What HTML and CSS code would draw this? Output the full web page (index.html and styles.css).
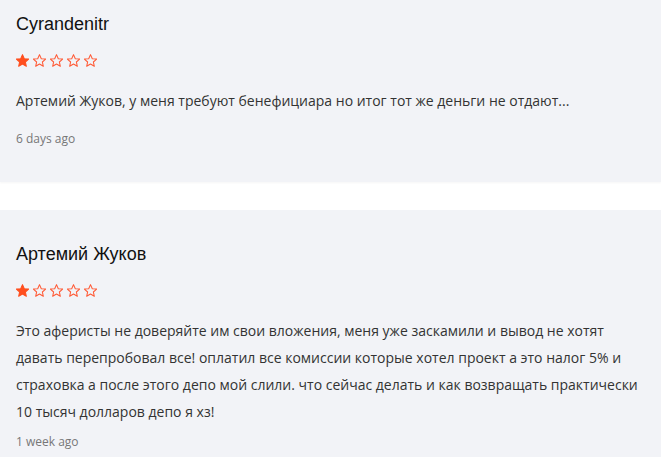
FILE: index.html
```html
<!DOCTYPE html>
<html lang="ru">
<head>
    <meta charset="UTF-8">
    <meta name="viewport" content="width=device-width, initial-scale=1.0">
    <title>Отзывы</title>
    <link rel="stylesheet" href="styles.css">
</head>
<body>
    <div class="reviews">
        <div class="review">
            <div class="review-name">Cyrandenitr</div>
            <div class="stars">
                <svg class="star on" viewBox="1.5 2 21 20"><path d="M12 2.5l2.9 6.6 7.1.6-5.4 4.7 1.6 7-6.2-3.7-6.2 3.7 1.6-7L2 9.7l7.1-.6z"/></svg>
                <svg class="star" viewBox="1.5 2 21 20"><path d="M12 2.5l2.9 6.6 7.1.6-5.4 4.7 1.6 7-6.2-3.7-6.2 3.7 1.6-7L2 9.7l7.1-.6z"/></svg>
                <svg class="star" viewBox="1.5 2 21 20"><path d="M12 2.5l2.9 6.6 7.1.6-5.4 4.7 1.6 7-6.2-3.7-6.2 3.7 1.6-7L2 9.7l7.1-.6z"/></svg>
                <svg class="star" viewBox="1.5 2 21 20"><path d="M12 2.5l2.9 6.6 7.1.6-5.4 4.7 1.6 7-6.2-3.7-6.2 3.7 1.6-7L2 9.7l7.1-.6z"/></svg>
                <svg class="star" viewBox="1.5 2 21 20"><path d="M12 2.5l2.9 6.6 7.1.6-5.4 4.7 1.6 7-6.2-3.7-6.2 3.7 1.6-7L2 9.7l7.1-.6z"/></svg>
            </div>
            <p class="review-text short">Артемий Жуков, у меня требуют бенефициара но итог тот же деньги не отдают...</p>
            <div class="review-date">6 days ago</div>
        </div>
        <div class="review">
            <div class="review-name">Артемий Жуков</div>
            <div class="stars">
                <svg class="star on" viewBox="1.5 2 21 20"><path d="M12 2.5l2.9 6.6 7.1.6-5.4 4.7 1.6 7-6.2-3.7-6.2 3.7 1.6-7L2 9.7l7.1-.6z"/></svg>
                <svg class="star" viewBox="1.5 2 21 20"><path d="M12 2.5l2.9 6.6 7.1.6-5.4 4.7 1.6 7-6.2-3.7-6.2 3.7 1.6-7L2 9.7l7.1-.6z"/></svg>
                <svg class="star" viewBox="1.5 2 21 20"><path d="M12 2.5l2.9 6.6 7.1.6-5.4 4.7 1.6 7-6.2-3.7-6.2 3.7 1.6-7L2 9.7l7.1-.6z"/></svg>
                <svg class="star" viewBox="1.5 2 21 20"><path d="M12 2.5l2.9 6.6 7.1.6-5.4 4.7 1.6 7-6.2-3.7-6.2 3.7 1.6-7L2 9.7l7.1-.6z"/></svg>
                <svg class="star" viewBox="1.5 2 21 20"><path d="M12 2.5l2.9 6.6 7.1.6-5.4 4.7 1.6 7-6.2-3.7-6.2 3.7 1.6-7L2 9.7l7.1-.6z"/></svg>
            </div>
            <p class="review-text">Это аферисты не доверяйте им свои вложения, меня уже заскамили и вывод не хотят давать перепробовал все! оплатил все комиссии которые хотел проект а это налог 5% и страховка а после этого депо мой слили. что сейчас делать и как возвращать практически 10 тысяч долларов депо я хз!</p>
            <div class="review-date">1 week ago</div>
        </div>
    </div>
</body>
</html>
```

FILE: styles.css
```css
body {
    margin: 0;
    background: #fff;
    font-family: "Open Sans", "Liberation Sans", sans-serif;
    overflow: hidden;
}
.reviews {
    display: flex;
    flex-direction: column;
    gap: 28px;
    margin-top: -20px; /* страница прокручена */
}
.review {
    background: #f2f3f7;
    padding: 32px 16px 34px;
    box-shadow: 0 1px 2px rgba(0, 0, 0, .04);
}
.review-name {
    font-family: "Liberation Sans", Arial, sans-serif;
    font-size: 18px;
    line-height: 24px;
    color: #111;
}
.stars {
    display: flex;
    gap: 4px;
    margin-top: 18px;
    height: 13px;
}
.star {
    width: 13px;
    height: 13px;
    fill: none;
    stroke: #ff5a36;
    stroke-width: 1.7;
    stroke-linejoin: round;
}
.star.on {
    fill: #ff4f1f;
    stroke: #ff4f1f;
}
.review-text {
    margin: 20px 0 0;
    max-width: 630px;
    font-size: 14px;
    line-height: 27px;
    color: #333;
}
.review-text.short {
    padding-bottom: 8px; /* короткий отзыв обрезан многоточием */
}
.review-date {
    margin-top: 8px;
    font-size: 12px;
    line-height: 18px;
    color: #777;
}
```
